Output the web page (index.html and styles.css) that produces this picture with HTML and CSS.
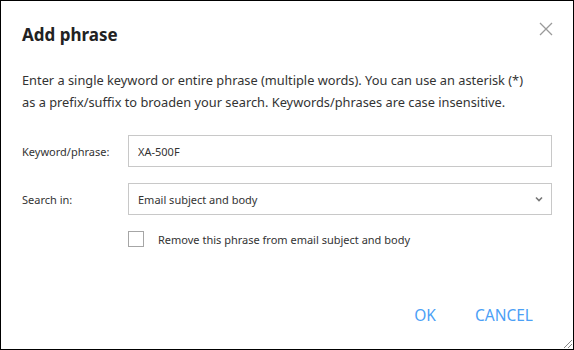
FILE: index.html
```html
<!DOCTYPE html>
<html lang="en">
<head>
    <meta charset="UTF-8">
    <title>Add phrase</title>
    <link rel="stylesheet" href="styles.css">
</head>
<body>

<div class="dialog">
    <div class="dialog-header">
        <h2>Add phrase</h2>
        <button class="close-btn" aria-label="Close">
            <svg width="14" height="14" viewBox="0 0 14 14">
                <path d="M1 1L13 13M13 1L1 13" stroke="#9a9a9a" stroke-width="1.3" fill="none"/>
            </svg>
        </button>
    </div>

    <p class="intro">Enter a single keyword or entire phrase (multiple words). You can use an asterisk (*) as a prefix/suffix to broaden your search. Keywords/phrases are case insensitive.</p>

    <div class="form-row">
        <label for="phrase">Keyword/phrase:</label>
        <input type="text" id="phrase" value="XA-500F">
    </div>

    <div class="form-row">
        <label for="searchIn">Search in:</label>
        <div class="select-box" id="searchIn">
            <span>Email subject and body</span>
            <svg width="8" height="6" viewBox="0 0 8 6">
                <path d="M1 1.5L4 4.5L7 1.5" stroke="#777" stroke-width="1.6" fill="none"/>
            </svg>
        </div>
    </div>

    <div class="check-row">
        <span class="checkbox"></span>
        <span>Remove this phrase from email subject and body</span>
    </div>

    <div class="dialog-footer">
        <button class="link-btn">OK</button>
        <button class="link-btn">CANCEL</button>
    </div>

    <span class="grip"></span>
</div>

</body>
</html>
```

FILE: styles.css
```css
body {
    margin: 0;
    padding: 0;
    font-family: "Segoe UI", "Noto Sans", sans-serif;
    color: #262626;
    background: #fff;
}
.dialog {
    position: relative;
    width: 574px;
    height: 350px;
    box-sizing: border-box;
    border: 1px solid #000;
    background: #fff;
    padding: 0 21px;
}
.dialog-header {
    display: flex;
    justify-content: space-between;
    align-items: flex-start;
    height: 70px;
}
.dialog-header h2 {
    margin: 22px 0 0;
    font-size: 17px;
    line-height: 24px;
    font-weight: 700;
    color: #222;
}
.close-btn {
    background: none;
    border: none;
    padding: 0;
    margin: 21px -1px 0 0;
    cursor: pointer;
    display: flex;
}
.intro {
    max-width: 512px;
    margin: -2px 0 22px;
    font-size: 12.8px;
    line-height: 22px;
    color: #333;
}
.form-row {
    display: flex;
    align-items: center;
    margin-bottom: 16px;
}
.form-row label {
    width: 106px;
    flex-shrink: 0;
    font-size: 11px;
    color: #333;
}
.form-row input,
.select-box {
    flex: 1;
    height: 32px;
    box-sizing: border-box;
    border: 1px solid #c8c8c8;
    padding: 0 9px;
    font-family: inherit;
    font-size: 11px;
    color: #333;
    outline: none;
}
.select-box {
    display: flex;
    justify-content: space-between;
    align-items: center;
    padding-right: 8px;
}
.check-row {
    display: flex;
    align-items: center;
    gap: 14px;
    margin-left: 106px;
    font-size: 11px;
    color: #333;
}
.checkbox {
    width: 16px;
    height: 16px;
    box-sizing: border-box;
    border: 1px solid #a6a6a6;
    background: #fff;
}
.dialog-footer {
    display: flex;
    justify-content: flex-end;
    gap: 39px;
    margin-top: 57px;
    padding-right: 19px;
}
.link-btn {
    background: none;
    border: none;
    padding: 0;
    font-family: inherit;
    font-size: 15.5px;
    color: #4ba0f6;
    cursor: pointer;
}
.grip {
    position: absolute;
    right: 1px;
    bottom: 1px;
    width: 8px;
    height: 8px;
    background: linear-gradient(135deg, transparent 45%, #888 45%, #888 52%, transparent 52%, transparent 70%, #888 70%, #888 77%, transparent 77%);
}
```
